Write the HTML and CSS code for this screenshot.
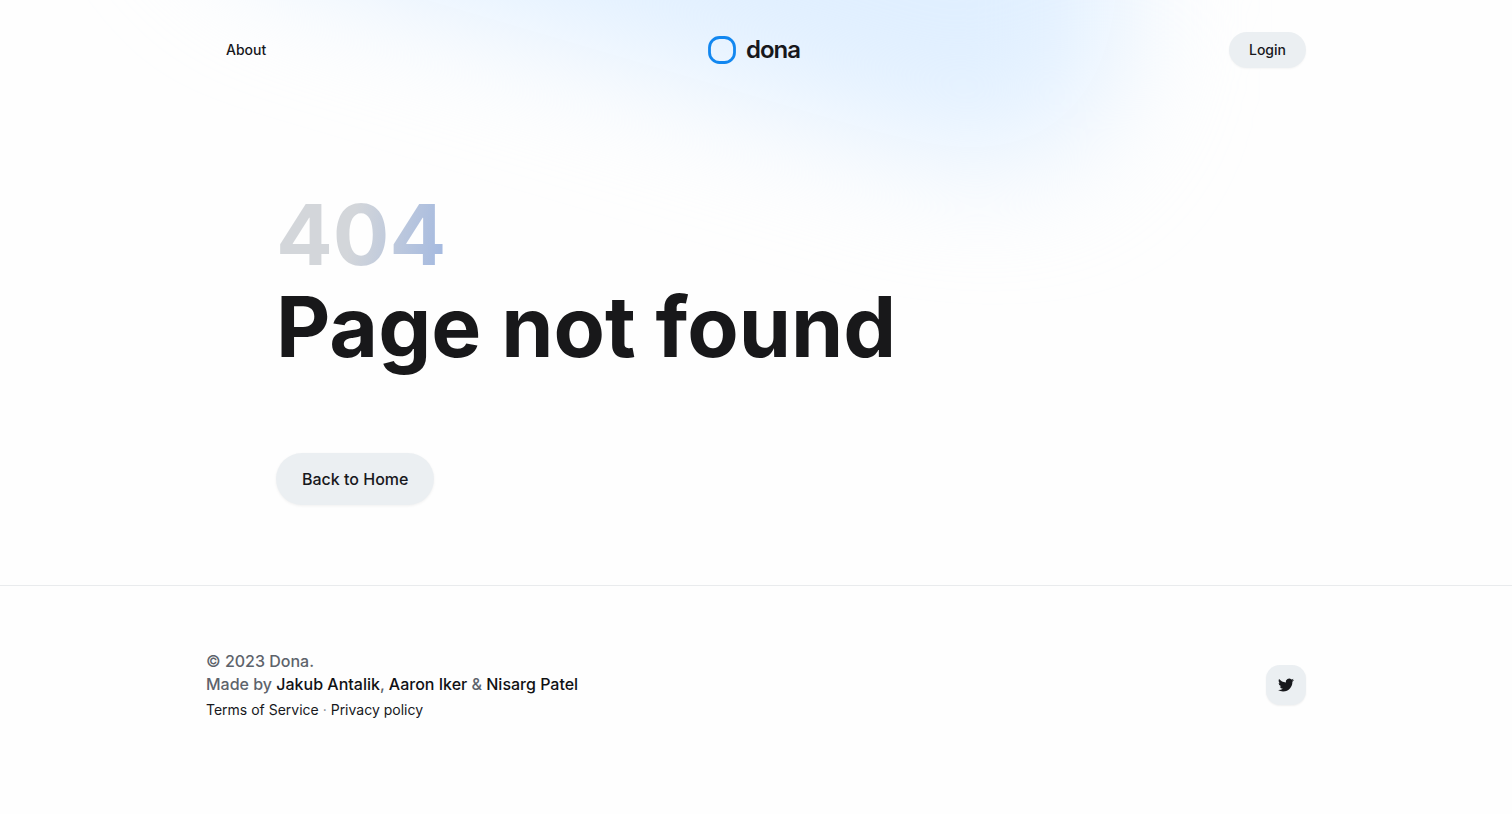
FILE: index.html
```html
<!DOCTYPE html>
<html lang="en">
<head>
  <meta charset="utf-8">
  <meta name="viewport" content="width=device-width, initial-scale=1">
  <title>Page not found - Dona</title>
  <link rel="stylesheet" href="styles.css">
</head>
<body>
  <div class="glow"><div class="glow-shape"></div></div>

  <header class="header">
    <nav class="nav"><a href="#about">About</a></nav>
    <a class="logo" href="#home">
      <svg width="28" height="28" viewBox="0 0 28 28" aria-hidden="true">
        <rect x="1.500" y="1.500" width="25" height="25" rx="10" fill="none" stroke="#1287f0" stroke-width="2.800"/>
      </svg>
      <span>dona</span>
    </a>
    <div class="account"><button class="login" type="button">Login</button></div>
  </header>

  <main class="main">
    <h1><span class="code">404</span> Page not found</h1>
    <a class="back" href="#home">Back to Home</a>
  </main>

  <footer class="footer">
    <div class="footer-inner">
      <div>
        <p class="credits">© 2023 Dona.<br>Made by <a href="#jakub">Jakub Antalik</a>, <a href="#aaron">Aaron Iker</a> &amp; <a href="#nisarg">Nisarg Patel</a></p>
        <p class="legal"><a href="#terms">Terms of Service</a> · <a href="#privacy">Privacy policy</a></p>
      </div>
      <a class="twitter" href="#twitter" aria-label="Twitter">
        <svg width="16" height="16" viewBox="0 0 24 24" aria-hidden="true">
          <path fill="#17181c" d="M23.950 4.570a10 10 0 0 1-2.820.770 4.960 4.960 0 0 0 2.160-2.720c-.950.550-2.010.950-3.130 1.180a4.920 4.920 0 0 0-8.380 4.480C7.690 8.090 4.070 6.130 1.640 3.160a4.820 4.820 0 0 0-.670 2.480c0 1.710.870 3.210 2.190 4.100a4.900 4.900 0 0 1-2.230-.620v.060a4.920 4.920 0 0 0 3.950 4.830 5 5 0 0 1-2.210.080 4.940 4.940 0 0 0 4.600 3.420A9.870 9.870 0 0 1 0 19.540a13.990 13.990 0 0 0 7.550 2.210c9.050 0 14-7.500 14-13.980 0-.210 0-.420-.020-.630a9.940 9.940 0 0 0 2.460-2.550z"/>
        </svg>
      </a>
    </div>
  </footer>
</body>
</html>
```
FILE: styles.css
```css
* {
  box-sizing: border-box;
}

body {
  margin: 0;
  background: #fefefe;
  color: #17181c;
  font-family: Inter, "Liberation Sans", sans-serif;
  font-size: 16px;
}

a {
  color: inherit;
  text-decoration: none;
}

/* soft blue light behind the header */
.glow {
  position: absolute;
  top: 0;
  left: 0;
  width: 100%;
  height: 400px;
  overflow: hidden;
  z-index: -1;
}

.glow-shape {
  position: absolute;
  top: -300px;
  left: 0;
  width: 100%;
  height: 700px;
  filter: blur(64px);
}

.glow-shape::before {
  content: "";
  display: block;
  height: 100%;
  background: #e0efff;
  clip-path: polygon(4% 0, 74% 0, 74% 340px, 72% 420px, 68% 460px, 62% 450px, 17% 250px);
}

.header {
  display: grid;
  grid-template-columns: 1fr auto 1fr;
  align-items: center;
  max-width: 1100px;
  height: 100px;
  margin: 0 auto;
}

.nav {
  padding: 0 20px 2px;
  font-size: 14px;
  font-weight: 500;
}

.logo {
  display: flex;
  align-items: center;
  gap: 10px;
  padding-right: 4px;
  font-size: 24px;
  font-weight: 600;
  letter-spacing: -1px;
}

.logo svg {
  display: block;
}

.logo span {
  padding-bottom: 1px;
}

.account {
  text-align: right;
}

.login {
  height: 36px;
  padding: 0 20px 2px;
  border: 0;
  border-radius: 18px;
  background: #ebeff2;
  box-shadow: 0 1px 2px rgba(0, 0, 0, 0.04);
  color: inherit;
  font: 500 14px Inter, "Liberation Sans", sans-serif;
}

.main {
  max-width: 960px;
  margin: 0 auto;
  padding: 89px 0 80px;
}

h1 {
  margin: 0 0 80px;
  color: #18181a;
  font-size: 84px;
  font-weight: 700;
  line-height: 92px;
}

.code {
  display: block;
  width: 168px;
  background: linear-gradient(100deg, #d3d6da 45%, #a2b8e0);
  -webkit-background-clip: text;
  background-clip: text;
  color: transparent;
}

.back {
  display: inline-flex;
  align-items: center;
  height: 52px;
  padding: 0 26px;
  border-radius: 26px;
  background: #ebeff2;
  box-shadow: 0 1px 3px rgba(0, 0, 0, 0.06);
  font-weight: 500;
}

.footer {
  border-top: 1px solid #e9ebed;
  padding: 64px 0 60px;
}

.footer-inner {
  display: flex;
  align-items: center;
  justify-content: space-between;
  max-width: 1100px;
  margin: 0 auto;
}

.credits,
.legal {
  margin: 0;
}

.credits {
  color: #5d636b;
  font-weight: 500;
  line-height: 23px;
}

.credits a {
  color: #101114;
}

.legal {
  margin-top: 4px;
  color: #85898f;
  font-size: 14px;
  line-height: 20px;
}

.legal a {
  color: #17181c;
}

.twitter {
  display: flex;
  align-items: center;
  justify-content: center;
  width: 40px;
  height: 40px;
  border-radius: 14px;
  background: #ebeff2;
  box-shadow: 0 1px 2px rgba(0, 0, 0, 0.06);
}
```
